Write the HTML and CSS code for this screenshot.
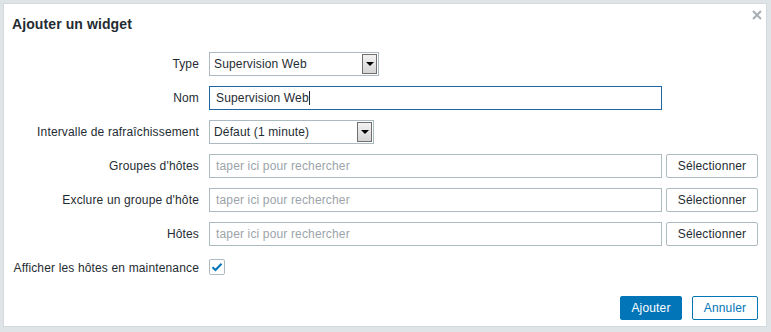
FILE: index.html
```html
<!DOCTYPE html>
<html lang="fr">
  <head>
    <meta charset="utf-8" />
    <title>Ajouter un widget</title>
    <link rel="stylesheet" href="styles.css">
  </head>
  <body>
    <div class="overlay">
      <div class="dialog">
        <div class="dialog-header">
          <h4>Ajouter un widget</h4>
          <span class="close">
            <svg width="10" height="10" viewBox="0 0 10 10">
              <path d="M1 1 L9 9 M9 1 L1 9" stroke="#a9b1b6" stroke-width="2.2" />
            </svg>
          </span>
        </div>
        <form class="form-grid">
          <label>Type</label>
          <div class="select select-type">
            <span>Supervision Web</span>
            <span class="arrow"></span>
          </div>

          <label>Nom</label>
          <div class="input input-focus">Supervision Web<span class="caret"></span></div>

          <label>Intervalle de rafraîchissement</label>
          <div class="select select-interval">
            <span>Défaut (1 minute)</span>
            <span class="arrow"></span>
          </div>

          <label>Groupes d'hôtes</label>
          <div class="multiselect">
            <div class="input placeholder">taper ici pour rechercher</div>
            <button type="button" class="btn-grey">Sélectionner</button>
          </div>

          <label>Exclure un groupe d'hôte</label>
          <div class="multiselect">
            <div class="input placeholder">taper ici pour rechercher</div>
            <button type="button" class="btn-grey">Sélectionner</button>
          </div>

          <label>Hôtes</label>
          <div class="multiselect">
            <div class="input placeholder">taper ici pour rechercher</div>
            <button type="button" class="btn-grey">Sélectionner</button>
          </div>

          <label>Afficher les hôtes en maintenance</label>
          <div class="check-row">
            <span class="checkbox">
              <svg width="12" height="10" viewBox="0 0 12 10">
                <path d="M1.5 5.2 L4.5 8 L10.5 1.8" fill="none" stroke="#0275b8" stroke-width="2" />
              </svg>
            </span>
          </div>
        </form>
        <div class="dialog-footer">
          <button type="button" class="btn-primary">Ajouter</button>
          <button type="button" class="btn-alt">Annuler</button>
        </div>
      </div>
    </div>
  </body>
</html>
```

FILE: styles.css
```css
body {
  margin: 0;
  background-color: #dfe4e7;
  font-family: Arial, "Liberation Sans", sans-serif;
  font-size: 12px;
  letter-spacing: 0.15px;
  color: #1f2c33;
}
.overlay {
  padding: 3px 4px 4px 3px;
}
.dialog {
  background-color: #ffffff;
  border: 1px solid #d3dadd;
  height: 324px;
  box-sizing: border-box;
  position: relative;
}
.dialog-header {
  padding: 10px 8px 0 8px;
  height: 38px;
  box-sizing: border-box;
}
.dialog-header h4 {
  margin: 0;
  font-size: 14px;
  font-weight: bold;
  line-height: 20px;
  letter-spacing: 0.1px;
}
.close {
  position: absolute;
  top: 6px;
  right: 4px;
  line-height: 0;
}
.form-grid {
  display: grid;
  grid-template-columns: 186px 1fr;
  column-gap: 10px;
  row-gap: 10px;
  padding: 10px 8px 0 9px;
  margin: 0;
}
.form-grid label {
  text-align: right;
  line-height: 24px;
  height: 24px;
  white-space: nowrap;
}
.input {
  height: 24px;
  box-sizing: border-box;
  border: 1px solid #acbbc2;
  padding: 0 6px;
  line-height: 22px;
  width: 453px;
  background-color: #ffffff;
}
.input-focus {
  border-color: #1f65a6;
}
.caret {
  display: inline-block;
  width: 1px;
  height: 14px;
  background-color: #1f2c33;
  vertical-align: -3px;
}
.placeholder {
  color: #9ba4aa;
  flex: 0 0 453px;
}
.select {
  height: 24px;
  box-sizing: border-box;
  border: 1px solid #acbbc2;
  display: flex;
  align-items: center;
  justify-content: space-between;
  padding: 1px 1px 1px 4px;
}
.select-type {
  width: 170px;
}
.select-interval {
  width: 165px;
}
.arrow {
  width: 15px;
  height: 20px;
  box-sizing: border-box;
  border: 1px solid #707070;
  background: linear-gradient(#f2f2f2, #d5d5d5);
  position: relative;
}
.arrow::after {
  content: "";
  position: absolute;
  left: 3px;
  top: 7px;
  border-left: 4px solid transparent;
  border-right: 4px solid transparent;
  border-top: 4px solid #000000;
}
.multiselect {
  display: flex;
  gap: 4px;
}
button {
  font-family: Arial, "Liberation Sans", sans-serif;
  font-size: 12px;
  letter-spacing: 0.15px;
  height: 24px;
  border-radius: 2px;
  cursor: pointer;
  padding: 0 6px;
}
.btn-grey {
  background-color: #ffffff;
  border: 1px solid #acbbc2;
  color: #1f2c33;
  width: 92px;
}
.check-row {
  display: flex;
  align-items: center;
  height: 24px;
}
.checkbox {
  width: 16px;
  height: 16px;
  box-sizing: border-box;
  border: 1px solid #acbbc2;
  border-radius: 2px;
  display: flex;
  align-items: center;
  justify-content: center;
  margin-top: -2px;
}
.dialog-footer {
  display: flex;
  justify-content: flex-end;
  gap: 10px;
  padding: 0 8px;
  margin-top: 16px;
}
.btn-primary {
  background-color: #0275b8;
  border: 1px solid #0275b8;
  color: #ffffff;
  width: 62px;
}
.btn-alt {
  background-color: #ffffff;
  border: 1px solid #0275b8;
  color: #0275b8;
  width: 66px;
}
```
